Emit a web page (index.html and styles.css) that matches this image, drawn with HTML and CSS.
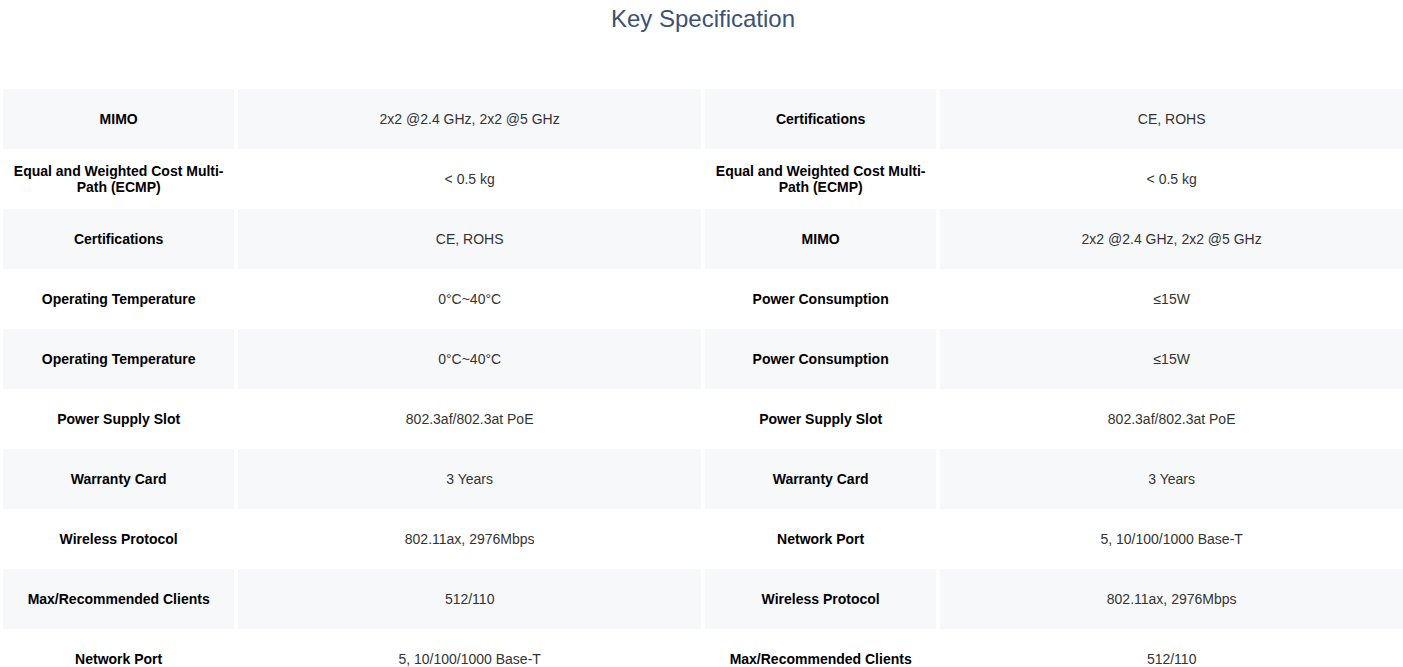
FILE: index.html
```html
<!DOCTYPE html>
<html lang="en">
<head>
<meta charset="utf-8">
<title>Key Specification</title>
<link rel="stylesheet" href="styles.css">
</head>
<body>
<section class="spec">
  <h2 class="spec-title">Key Specification</h2>
  <div class="spec-grid">
    <div class="cell label shaded">MIMO</div>
    <div class="cell value shaded">2x2 @2.4 GHz, 2x2 @5 GHz</div>
    <div class="cell label shaded">Certifications</div>
    <div class="cell value shaded">CE, ROHS</div>

    <div class="cell label">Equal and Weighted Cost Multi-Path (ECMP)</div>
    <div class="cell value">&lt; 0.5 kg</div>
    <div class="cell label">Equal and Weighted Cost Multi-Path (ECMP)</div>
    <div class="cell value">&lt; 0.5 kg</div>

    <div class="cell label shaded">Certifications</div>
    <div class="cell value shaded">CE, ROHS</div>
    <div class="cell label shaded">MIMO</div>
    <div class="cell value shaded">2x2 @2.4 GHz, 2x2 @5 GHz</div>

    <div class="cell label">Operating Temperature</div>
    <div class="cell value">0°C~40°C</div>
    <div class="cell label">Power Consumption</div>
    <div class="cell value">≤15W</div>

    <div class="cell label shaded">Operating Temperature</div>
    <div class="cell value shaded">0°C~40°C</div>
    <div class="cell label shaded">Power Consumption</div>
    <div class="cell value shaded">≤15W</div>

    <div class="cell label">Power Supply Slot</div>
    <div class="cell value">802.3af/802.3at PoE</div>
    <div class="cell label">Power Supply Slot</div>
    <div class="cell value">802.3af/802.3at PoE</div>

    <div class="cell label shaded">Warranty Card</div>
    <div class="cell value shaded">3 Years</div>
    <div class="cell label shaded">Warranty Card</div>
    <div class="cell value shaded">3 Years</div>

    <div class="cell label">Wireless Protocol</div>
    <div class="cell value">802.11ax, 2976Mbps</div>
    <div class="cell label">Network Port</div>
    <div class="cell value">5, 10/100/1000 Base-T</div>

    <div class="cell label shaded">Max/Recommended Clients</div>
    <div class="cell value shaded">512/110</div>
    <div class="cell label shaded">Wireless Protocol</div>
    <div class="cell value shaded">802.11ax, 2976Mbps</div>

    <div class="cell label">Network Port</div>
    <div class="cell value">5, 10/100/1000 Base-T</div>
    <div class="cell label">Max/Recommended Clients</div>
    <div class="cell value">512/110</div>
  </div>
</section>
</body>
</html>
```

FILE: styles.css
```css
html, body {
  margin: 0;
  padding: 0;
  background: #ffffff;
  font-family: "Liberation Sans", Arial, sans-serif;
}

.spec {
  padding: 0 0 0 3px;
}

.spec-title {
  margin: 0;
  padding-top: 5px;
  height: 89px;
  box-sizing: border-box;
  text-align: center;
  font-size: 24px;
  font-weight: normal;
  line-height: 28px;
  color: #3b5275;
}

.spec-grid {
  display: grid;
  grid-template-columns: 1fr 2fr 1fr 2fr;
  column-gap: 4px;
  grid-auto-rows: 60px;
}

.cell {
  display: flex;
  align-items: center;
  justify-content: center;
  text-align: center;
  padding: 0 10px;
  font-size: 14px;
  line-height: 16px;
}

.shaded {
  background: #f7f8fa;
}

.label {
  font-weight: bold;
  color: #000000;
}

.value {
  color: #333333;
}
```
